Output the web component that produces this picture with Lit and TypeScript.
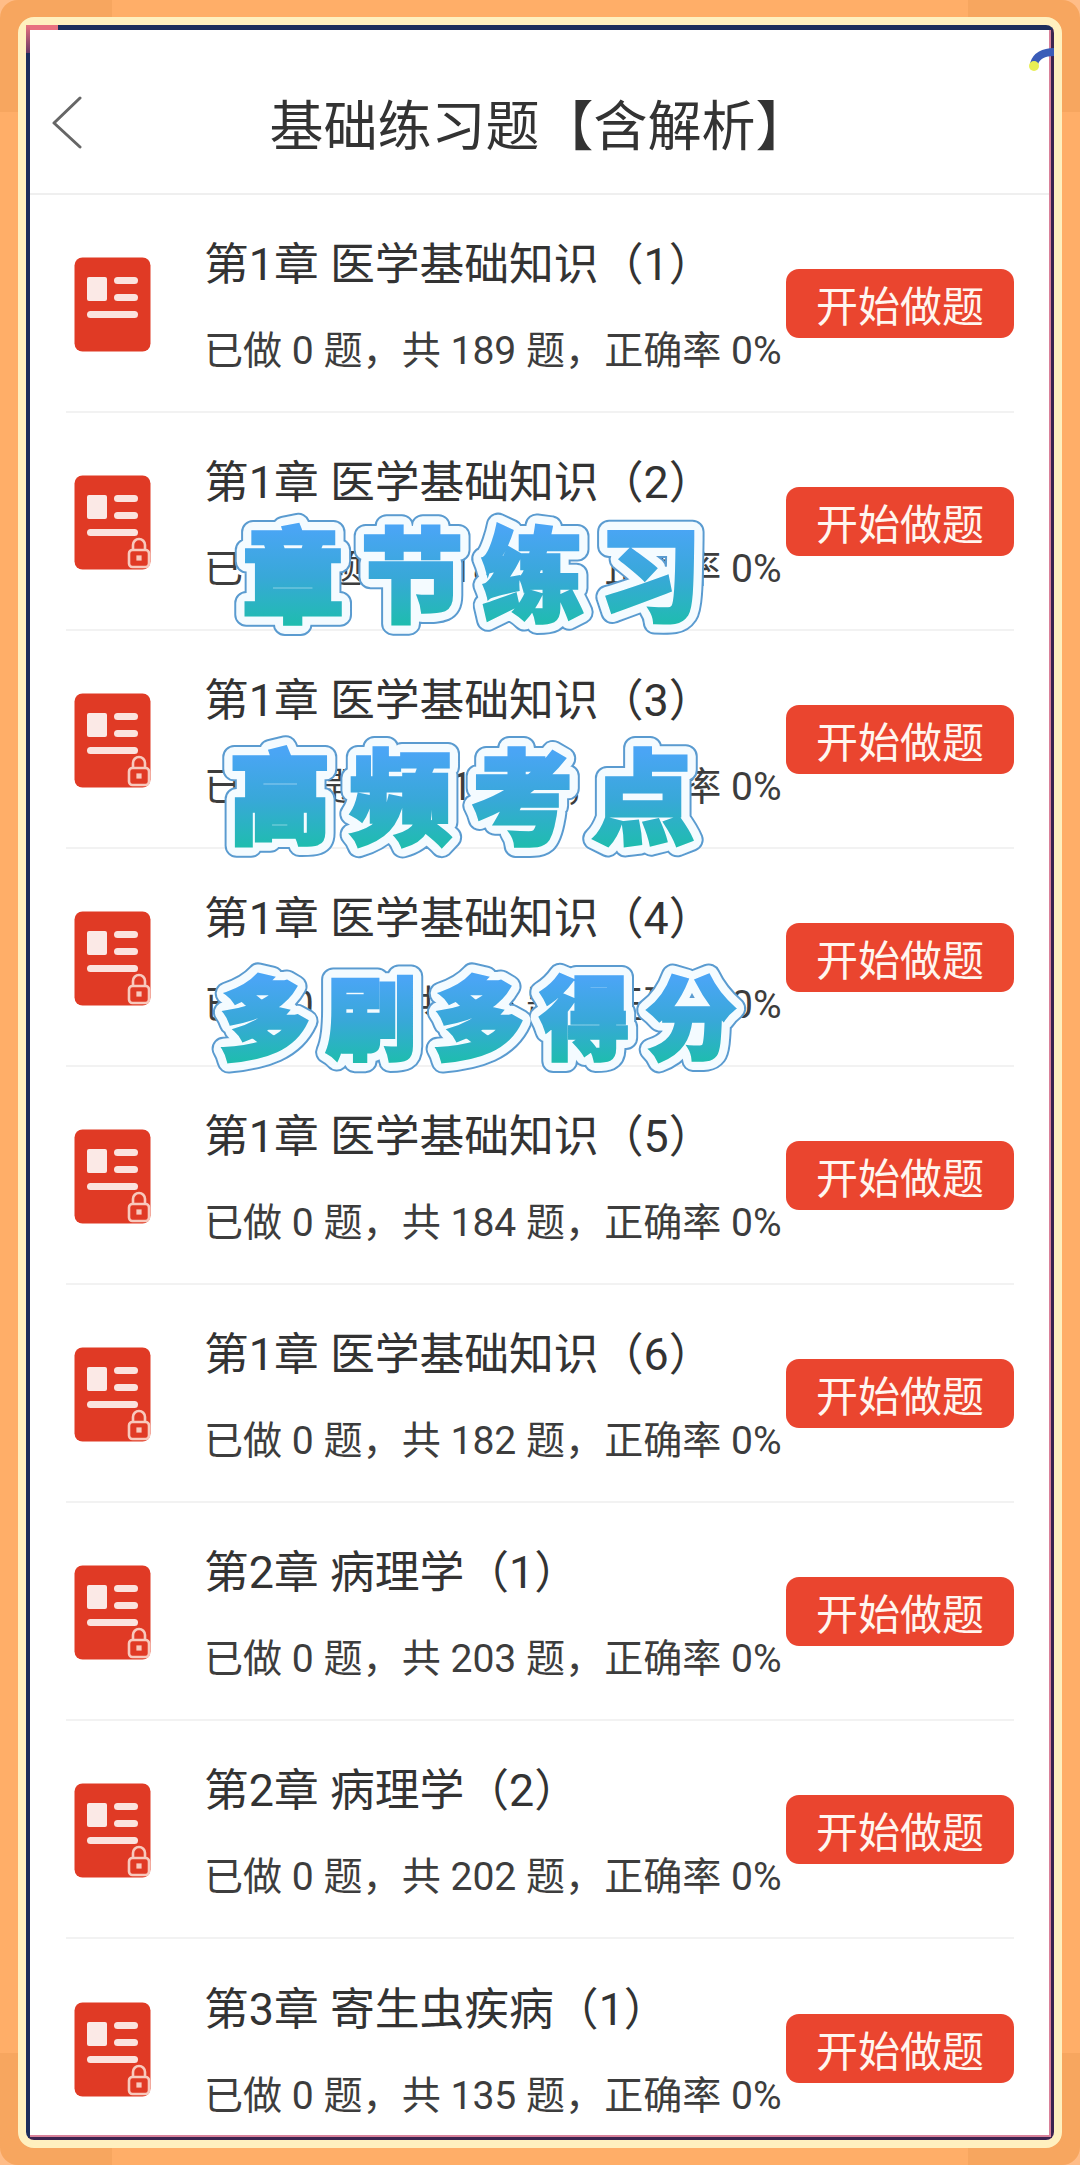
import { LitElement, html, css, svg } from "lit";
import { customElement } from "lit/decorators.js";

interface Chapter {
  title: string;
  total: number;
  locked: boolean;
}

const chapters: Chapter[] = [
  { title: "第1章 医学基础知识（1）", total: 189, locked: false },
  { title: "第1章 医学基础知识（2）", total: 188, locked: true },
  { title: "第1章 医学基础知识（3）", total: 187, locked: true },
  { title: "第1章 医学基础知识（4）", total: 185, locked: true },
  { title: "第1章 医学基础知识（5）", total: 184, locked: true },
  { title: "第1章 医学基础知识（6）", total: 182, locked: true },
  { title: "第2章 病理学（1）", total: 203, locked: true },
  { title: "第2章 病理学（2）", total: 202, locked: true },
  { title: "第3章 寄生虫疾病（1）", total: 135, locked: true },
];

// sticker captions that sit over the list
const stickers = [
  { id: "s1", text: "章节练习", xs: "242 361 482 599", y: 614, size: 102, top: 528, bottom: 626 },
  { id: "s2", text: "高频考点", xs: "229 350 471 592", y: 836, size: 102, top: 752, bottom: 848 },
  { id: "s3", text: "多刷多得分", xs: "220 326 434 540 646", y: 1052, size: 90, top: 979, bottom: 1063 },
];

@customElement("app-root")
export class AppRoot extends LitElement {
  static styles = css`
    :host {
      display: block;
      position: relative;
      width: 1080px;
      height: 2165px;
      box-sizing: border-box;
      padding: 17px 18px 17px 18px;
      background:
        linear-gradient(#f7a65f, #f7a65f) 0 0 / 112px 112px no-repeat,
        linear-gradient(#f7a65f, #f7a65f) 100% 0 / 112px 112px no-repeat,
        linear-gradient(#f7a65f, #f7a65f) 0 100% / 112px 112px no-repeat,
        linear-gradient(#f7a65f, #f7a65f) 100% 100% / 112px 112px no-repeat,
        #ffae68;
      overflow: hidden;
      font-family: Roboto, "Noto Sans CJK SC", sans-serif;
      color: #333;
    }

    .tips {
      position: absolute;
      inset: 0;
      border-radius: 18px;
      box-shadow: 0 0 0 20px #ffbd88;
      pointer-events: none;
    }

    .frame {
      position: relative;
      height: 100%;
      box-sizing: border-box;
      border: 8px solid #fff0bf;
      border-radius: 16px;
      overflow: hidden;
    }

    .screen {
      height: 100%;
      box-sizing: border-box;
      border-style: solid;
      border-color: #1c2e5c #3c2350 #3c2350 #1c2e5c;
      border-width: 5px 3px 3px 4px;
      background: #fff;
      overflow: hidden;
    }

    .inner {
      height: 100%;
      box-sizing: border-box;
      border-right: 2px solid #d9819a;
      border-bottom: 2px solid #d9819a;
      overflow: hidden;
    }

    .bar {
      display: flex;
      align-items: center;
      justify-content: center;
      position: relative;
      height: 165px;
      box-sizing: border-box;
      padding-top: 22px;
      border-bottom: 2px solid #efefef;
      font-size: 54px;
      color: #333;
    }

    .back {
      position: absolute;
      left: 21px;
      top: 66px;
      width: 32px;
      height: 54px;
    }

    .row {
      display: flex;
      align-items: center;
      height: 218px;
      box-sizing: border-box;
      margin: 0 35px 0 36px;
      padding-left: 8px;
      border-bottom: 2px solid #f2f2f2;
    }

    .row:last-child {
      border-bottom: none;
    }

    .doc {
      flex: none;
      width: 78px;
      height: 95px;
      margin: 2px 52px 0 0;
    }

    .info {
      flex: 1;
      min-width: 0;
      padding-top: 8px;
    }

    .name {
      font-size: 44.8px;
      line-height: 56px;
      white-space: nowrap;
      margin: -2px 0 33px;
    }

    .stats {
      font-size: 39.1px;
      line-height: 50px;
      white-space: nowrap;
      color: #3d3d3d;
    }

    .start {
      flex: none;
      width: 228px;
      height: 69px;
      padding: 0;
      border: none;
      border-radius: 13px;
      background: #ea452f;
      color: #fff6ef;
      font: inherit;
      font-size: 42px;
      margin-left: -40px;
    }

    .arc {
      position: absolute;
      left: 1026px;
      top: 44px;
      width: 32px;
      height: 32px;
    }

    .stain {
      position: absolute;
      left: 26px;
      top: 25px;
      width: 32px;
      height: 5px;
      background: #e8707f;
    }

    .stain-side {
      position: absolute;
      left: 26px;
      top: 25px;
      width: 4px;
      height: 28px;
      background: linear-gradient(#e8707f, #6a3a66);
    }

    .overlay {
      position: absolute;
      left: 0;
      top: 0;
      width: 1080px;
      height: 1100px;
      pointer-events: none;
    }

    .overlay text {
      font-family: "Noto Sans CJK SC", sans-serif;
      font-weight: 900;
    }
  `;

  renderDoc(locked: boolean) {
    return html`<svg class="doc" viewBox="0 0 78 95">
      <rect x="0.5" y="0.5" width="76" height="94" rx="8" fill="#e03a25" />
      <rect x="13" y="20" width="20" height="24" rx="2" fill="#fbe9e6" />
      <rect x="40" y="20" width="24" height="7" rx="3.5" fill="#fbe3de" />
      <rect x="40" y="37" width="24" height="7" rx="3.5" fill="#fbe3de" />
      <rect x="13" y="54" width="51" height="7" rx="3.5" fill="#fbe3de" />
      ${locked
        ? svg`<g fill="none" stroke="#f8c9bd" stroke-width="2.6">
            <path d="M59 75v-5a6 6 0 0 1 12 0v5" />
            <rect x="55" y="75" width="20" height="17" rx="3.5" />
            <rect x="63" y="81" width="4" height="4" fill="#f8c9bd" stroke-width="1.2" />
          </g>`
        : ""}
    </svg>`;
  }

  render() {
    return html`
      <div class="tips"></div>
      <div class="frame">
        <div class="screen">
          <div class="inner">
            <header class="bar">
              <svg class="back" viewBox="0 0 32 54" fill="none" stroke="#666" stroke-width="3" stroke-linecap="round" stroke-linejoin="round">
                <path d="M29 2 3 27l26 24" />
              </svg>
              基础练习题【含解析】
            </header>
            ${chapters.map(
              (c) => html`
                <div class="row">
                  ${this.renderDoc(c.locked)}
                  <div class="info">
                    <div class="name">${c.title}</div>
                    <div class="stats">已做 0 题，共 ${c.total} 题，正确率 0%</div>
                  </div>
                  <button class="start">开始做题</button>
                </div>
              `
            )}
          </div>
        </div>
      </div>

      <div class="stain"></div>
      <div class="stain-side"></div>

      <svg class="arc" viewBox="0 0 32 32">
        <path d="M8 20C10 12 18 8 28 8" fill="none" stroke="#3a5cb8" stroke-width="8" />
        <circle cx="8" cy="22" r="5" fill="#e8ee55" />
      </svg>

      <svg class="overlay" viewBox="0 0 1080 1100">
        <defs>
          ${stickers.map(
            (s) => svg`
              <linearGradient id="g-${s.id}" gradientUnits="userSpaceOnUse" x1="0" x2="0" y1=${s.top} y2=${s.bottom}>
                <stop offset="0" stop-color="#4aa5f5" />
                <stop offset="0.5" stop-color="#38a8d8" />
                <stop offset="1" stop-color="#1ebdae" />
              </linearGradient>
              <text id=${s.id} x=${s.xs} y=${s.y} font-size=${s.size}>${s.text}</text>
            `
          )}
        </defs>
        ${stickers.map(
          (s) => svg`
            <use href="#${s.id}" fill="#5a9bd0" stroke="#5a9bd0" stroke-width="24" stroke-linejoin="round" />
            <use href="#${s.id}" fill="#f4fbff" stroke="#f4fbff" stroke-width="20" stroke-linejoin="round" />
            <use href="#${s.id}" fill="url(#g-${s.id})" stroke="url(#g-${s.id})" stroke-width="3.5" stroke-linejoin="miter" />
          `
        )}
      </svg>
    `;
  }
}
